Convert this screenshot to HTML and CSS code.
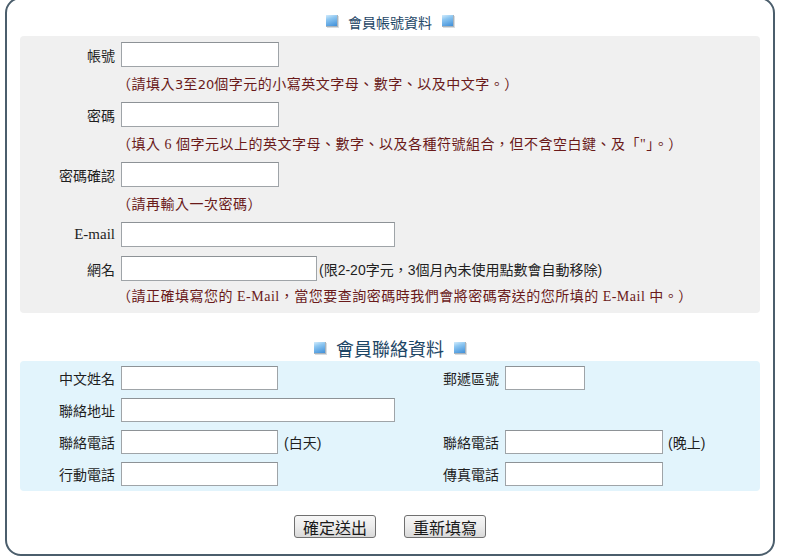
FILE: index.html
```html
<!DOCTYPE html>
<html lang="zh-Hant">
<head>
<meta charset="utf-8">
<title>會員資料</title>
<link rel="stylesheet" href="styles.css">
</head>
<body>
<div class="frame">
  <div class="sec-head sec-head-1">
    <span class="ico"></span><span class="sec-title">會員帳號資料</span><span class="ico"></span>
  </div>
  <div class="panel panel-gray">
    <div class="row"><span class="lbl">帳號</span><input class="inp w158" type="text"></div>
    <div class="note">（請填入<span class="num">3</span>至<span class="num">20</span>個字元的小寫英文字母、數字、以及中文字。）</div>
    <div class="row"><span class="lbl">密碼</span><input class="inp w158" type="password"></div>
    <div class="note">（填入 6 個字元以上的英文字母、數字、以及各種符號組合，但不含空白鍵、及「"」。）</div>
    <div class="row"><span class="lbl">密碼確認</span><input class="inp w158" type="password"></div>
    <div class="note">（請再輸入一次密碼）</div>
    <div class="row row-email"><span class="lbl lbl-serif">E-mail</span><input class="inp w274" type="text"></div>
    <div class="row"><span class="lbl">網名</span><input class="inp w196" type="text"><span class="suffix suffix-tight">(限2-20字元，3個月內未使用點數會自動移除)</span></div>
    <div class="note note-last">（請正確填寫您的 E-Mail，當您要查詢密碼時我們會將密碼寄送的您所填的 E-Mail 中。）</div>
  </div>

  <div class="sec-head sec-head-2">
    <span class="ico"></span><span class="sec-title sec-title-lg">會員聯絡資料</span><span class="ico"></span>
  </div>
  <div class="panel panel-blue">
    <span class="lbl">中文姓名</span>
    <div class="cell"><input class="inp inp-s w157" type="text"></div>
    <span class="lbl">郵遞區號</span>
    <div class="cell"><input class="inp inp-s w80" type="text"></div>

    <span class="lbl">聯絡地址</span>
    <div class="cell"><input class="inp inp-s w274" type="text"></div>
    <span></span>
    <span></span>

    <span class="lbl">聯絡電話</span>
    <div class="cell"><input class="inp inp-s w157" type="text"><span class="suffix">(白天)</span></div>
    <span class="lbl">聯絡電話</span>
    <div class="cell"><input class="inp inp-s w158" type="text"><span class="suffix suffix-5">(晚上)</span></div>

    <span class="lbl">行動電話</span>
    <div class="cell"><input class="inp inp-s w157" type="text"></div>
    <span class="lbl">傳真電話</span>
    <div class="cell"><input class="inp inp-s w158" type="text"></div>
  </div>

  <div class="actions">
    <button class="btn" type="submit">確定送出</button>
    <button class="btn" type="reset">重新填寫</button>
  </div>
</div>
</body>
</html>
```

FILE: styles.css
```css
html, body {
  margin: 0;
  padding: 0;
  background: #ffffff;
}

body {
  font-family: "Liberation Sans", "Noto Sans CJK TC", sans-serif;
  font-size: 14px;
  color: #222222;
  overflow: hidden;
}

.frame {
  margin: -3px 0 0 5px;
  width: 770px;
  height: 559px;
  box-sizing: border-box;
  border: 2px solid #4b5e6c;
  border-radius: 16px;
  padding: 0 13px;
}

.sec-head {
  display: flex;
  justify-content: center;
  align-items: flex-end;
  gap: 10px;
  box-sizing: border-box;
}

.sec-head-1 {
  height: 37px;
  padding-bottom: 6px;
}

.sec-head-2 {
  height: 48px;
  padding-bottom: 3px;
}

.sec-title {
  font-family: "Noto Sans CJK TC", sans-serif;
  font-size: 14px;
  line-height: 16px;
  color: #1d4666;
}

.sec-title-lg {
  font-size: 18px;
  line-height: 20px;
}

.ico {
  width: 11px;
  height: 11px;
  margin-bottom: 3px;
  background: linear-gradient(160deg, #d3ecfc 0%, #8cc6f1 35%, #3f8fd9 100%);
  border-right: 1px solid #a9b3bb;
  border-bottom: 1px solid #a9b3bb;
  box-shadow: 1px 1px 0 #d8dde1;
}

.sec-head-2 .ico {
  margin-bottom: 4px;
}

.panel {
  box-sizing: border-box;
  border-radius: 4px;
}

.panel-gray {
  background: #f0f0f0;
  height: 277px;
  padding-top: 6px;
  display: flex;
  flex-direction: column;
}

.row {
  display: flex;
  align-items: center;
  height: 25px;
}

.row-email {
  margin-bottom: 9px;
}

.lbl {
  font-family: "Noto Sans CJK TC", sans-serif;
  font-size: 14px;
  color: #1f1f1f;
  text-align: right;
  white-space: nowrap;
}

.panel-gray .lbl {
  width: 95px;
  margin-right: 6px;
}

.lbl-serif {
  font-family: "Liberation Serif", "Noto Sans CJK TC", serif;
  font-size: 15px;
}

.note {
  height: 35px;
  line-height: 35px;
  padding-left: 97px;
  font-family: "Liberation Serif", "Noto Sans CJK TC", serif;
  font-size: 14px;
  letter-spacing: 0.5px;
  color: #6a1a1a;
  white-space: nowrap;
}

.num {
  font-family: "DejaVu Sans", sans-serif;
  font-size: 13px;
  letter-spacing: 0;
}

.note-last {
  height: 32px;
  line-height: 32px;
}

.inp {
  box-sizing: border-box;
  height: 25px;
  margin: 0;
  padding: 0 3px;
  border: 1px solid #9fa4a8;
  border-top-color: #8d9296;
  background: #ffffff;
  font-size: 13px;
}

.inp-s {
  height: 24px;
}

.w80 { width: 80px; }
.w157 { width: 157px; }
.w158 { width: 158px; }
.w196 { width: 196px; }
.w274 { width: 274px; }

.suffix {
  font-family: "Liberation Sans", "Noto Sans CJK TC", sans-serif;
  font-size: 14px;
  color: #1f1f1f;
  margin-left: 6px;
  white-space: nowrap;
}

.suffix-tight {
  margin-left: 2px;
}

.suffix-5 {
  margin-left: 5px;
}

.panel-blue {
  background: #e2f4fc;
  height: 130px;
  padding: 5px 0;
  display: grid;
  grid-template-columns: 95px 292px 80px 255px;
  grid-auto-rows: 24px;
  column-gap: 6px;
  row-gap: 8px;
  align-items: center;
}

.cell {
  display: flex;
  align-items: center;
}

.actions {
  display: flex;
  justify-content: center;
  gap: 28px;
  margin-top: 24px;
}

.btn {
  box-sizing: border-box;
  width: 82px;
  height: 23px;
  padding: 0;
  font-family: "Noto Sans CJK TC", sans-serif;
  font-size: 16px;
  line-height: 20px;
  color: #1a1a1a;
  border: 1px solid #707070;
  border-radius: 3px;
  background: linear-gradient(#f7f7f7 0%, #ececec 50%, #d9d9d9 100%);
}
```
